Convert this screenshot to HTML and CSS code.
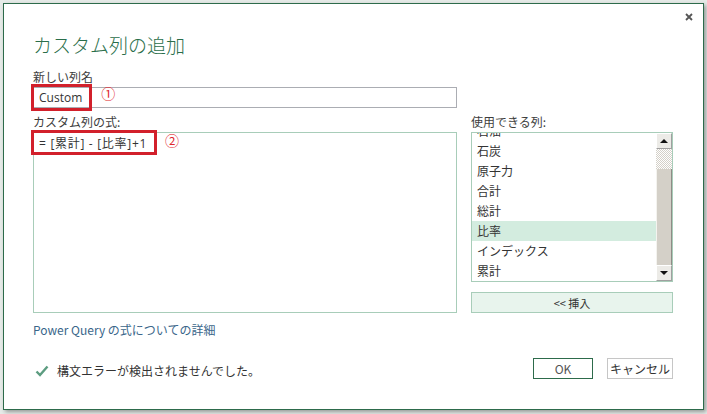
FILE: index.html
```html
<!DOCTYPE html>
<html lang="ja">
<head>
    <meta charset="UTF-8">
    <meta name="viewport" content="width=device-width, initial-scale=1.0">
    <title>カスタム列の追加</title>
    <link rel="stylesheet" href="styles.css">
</head>
<body>

    <div class="dialog">
        <div class="topbar">
            <button class="close" aria-label="閉じる">
                <svg width="8" height="8" viewBox="0 0 8 8"><path d="M1 1L7 7M7 1L1 7" stroke="#555" stroke-width="1.8"/></svg>
            </button>
        </div>

        <div class="content">
            <h2 class="title">カスタム列の追加</h2>

            <!-- New column name -->
            <div class="field-label">新しい列名</div>
            <div class="name-input">
                <span class="marked">Custom</span>
                <span class="note">①</span>
            </div>

            <div class="columns">
                <div class="col-left">
                    <div class="field-label">カスタム列の式:</div>
                    <div class="formula">
                        <div class="formula-line">
                            <span class="marked">= [累計] - [比率]+1</span>
                            <span class="note">②</span>
                        </div>
                    </div>
                </div>

                <div class="col-right">
                    <div class="field-label">使用できる列:</div>
                    <div class="listbox">
                        <ul class="items">
                            <li>石油</li>
                            <li>石炭</li>
                            <li>原子力</li>
                            <li>合計</li>
                            <li>総計</li>
                            <li class="selected">比率</li>
                            <li>インデックス</li>
                            <li>累計</li>
                        </ul>
                        <div class="scrollbar">
                            <div class="sb-btn"><span class="arrow up"></span></div>
                            <div class="sb-track"></div>
                            <div class="sb-thumb"></div>
                            <div class="sb-btn"><span class="arrow down"></span></div>
                        </div>
                    </div>
                    <button class="insert">&lt;&lt; 挿入</button>
                </div>
            </div>

            <a class="help-link" href="#">Power Query の式についての詳細</a>

            <div class="footer">
                <div class="status">
                    <svg width="14" height="12" viewBox="0 0 14 12"><path d="M1.5 6.5L5 10L12.5 1.5" fill="none" stroke="#5c9c80" stroke-width="2.4"/></svg>
                    <span>構文エラーが検出されませんでした。</span>
                </div>
                <div class="actions">
                    <button class="btn primary">OK</button>
                    <button class="btn">キャンセル</button>
                </div>
            </div>
        </div>
    </div>

</body>
</html>
```

FILE: styles.css
```css
body {
    margin: 0;
    padding: 3px 0 0 3px;
    height: 414px;
    box-sizing: border-box;
    overflow: hidden;
    background: #e6ebe8;
    font-family: "Noto Sans CJK JP", sans-serif;
    color: #3a3a3a;
}

.dialog {
    width: 701px;
    height: 407px;
    box-sizing: border-box;
    background: #fff;
    border: 1px solid #2d6b4b;
    box-shadow: 2px 2px 4px rgba(0, 0, 0, 0.35);
}

.topbar {
    height: 29px;
    box-sizing: border-box;
    display: flex;
    justify-content: flex-end;
    padding: 9px 10px 0 0;
}

.close {
    border: none;
    background: none;
    padding: 0;
    width: 8px;
    height: 8px;
    display: flex;
}

.content {
    padding: 0 30px 0 29px;
}

.title {
    margin: 0 0 12px 0;
    font-size: 19px;
    line-height: 24px;
    font-weight: 300;
    color: #2a6e4a;
}

.field-label {
    font-size: 12px;
    line-height: 16px;
    margin-bottom: 2px;
    color: #3d3d3d;
}

.name-input {
    width: 424px;
    height: 21px;
    box-sizing: border-box;
    border: 1px solid #abadb3;
    display: flex;
    margin-bottom: 6px;
}

.marked {
    outline: 3px solid #d2202b;
    display: flex;
    align-items: center;
    font-size: 12px;
    color: #333;
}

.name-input .marked {
    margin-left: 1px;
    padding: 0 6px 0 4px;
    outline-offset: 1px;
    font-family: "Open Sans", "Noto Sans CJK JP", sans-serif;
}

.note {
    color: #e0282e;
    font-size: 14px;
    line-height: 14px;
    align-self: flex-start;
}

.name-input .note {
    margin: -2px 0 0 13px;
}

.columns {
    display: grid;
    grid-template-columns: 424px 202px;
    column-gap: 14px;
}

.formula {
    height: 181px;
    box-sizing: border-box;
    border: 1px solid #a8cdb9;
}

.formula-line {
    display: flex;
}

.formula .marked {
    height: 19px;
    padding: 0 7px 0 5px;
    letter-spacing: 0.7px;
    font-family: "Open Sans", "Noto Sans CJK JP", sans-serif;
}

.formula .note {
    margin-left: 11px;
}

.listbox {
    height: 150px;
    box-sizing: border-box;
    border: 1px solid #a8cdb9;
    display: flex;
    overflow: hidden;
}

.items {
    list-style: none;
    margin: -12px 0 0 0;
    padding: 0;
    flex: 1;
}

.items li {
    height: 20px;
    line-height: 20px;
    font-size: 12px;
    padding-left: 5px;
    color: #333;
}

.items li.selected {
    background: #d3ecdf;
}

.scrollbar {
    width: 16px;
    display: flex;
    flex-direction: column;
}

.sb-btn {
    height: 16px;
    box-sizing: border-box;
    background: #ecebe7;
    border: 1px solid;
    border-color: #fff #a0a0a0 #a0a0a0 #fff;
    display: flex;
    align-items: center;
    justify-content: center;
}

.arrow {
    width: 0;
    height: 0;
    border-left: 4px solid transparent;
    border-right: 4px solid transparent;
}

.arrow.up {
    border-bottom: 4px solid #111;
}

.arrow.down {
    border-top: 4px solid #111;
}

.sb-track {
    height: 20px;
    background: repeating-conic-gradient(#d4d0c8 0 25%, #fff 0 50%) 0 0 / 2px 2px;
}

.sb-thumb {
    flex: 1;
    box-sizing: border-box;
    background: #d4d0c8;
    border-left: 1px solid #f4f3ef;
    border-right: 1px solid #8e8c86;
}

.insert {
    width: 100%;
    height: 21px;
    margin-top: 10px;
    border: 1px solid #a8cdb9;
    background: #e8f4ed;
    font-family: "Noto Sans CJK JP", sans-serif;
    font-size: 11px;
    color: #333;
    padding: 0;
}

.help-link {
    display: block;
    margin-top: 9px;
    font-size: 12px;
    line-height: 16px;
    color: #3a668a;
    text-decoration: none;
}

.footer {
    margin-top: 20px;
    display: flex;
    justify-content: space-between;
    align-items: flex-start;
}

.status {
    display: flex;
    align-items: center;
    gap: 8px;
    padding: 5px 0 0 2px;
    font-size: 12px;
    line-height: 16px;
    color: #333;
}

.actions {
    display: flex;
    gap: 14px;
}

.btn {
    width: 66px;
    height: 21px;
    padding: 0;
    background: #fff;
    border: 1px solid #c6c6c6;
    font-family: "Noto Sans CJK JP", sans-serif;
    font-size: 12px;
    color: #333;
}

.btn.primary {
    width: 60px;
    border-color: #2d6b4b;
    color: #555;
}
```
